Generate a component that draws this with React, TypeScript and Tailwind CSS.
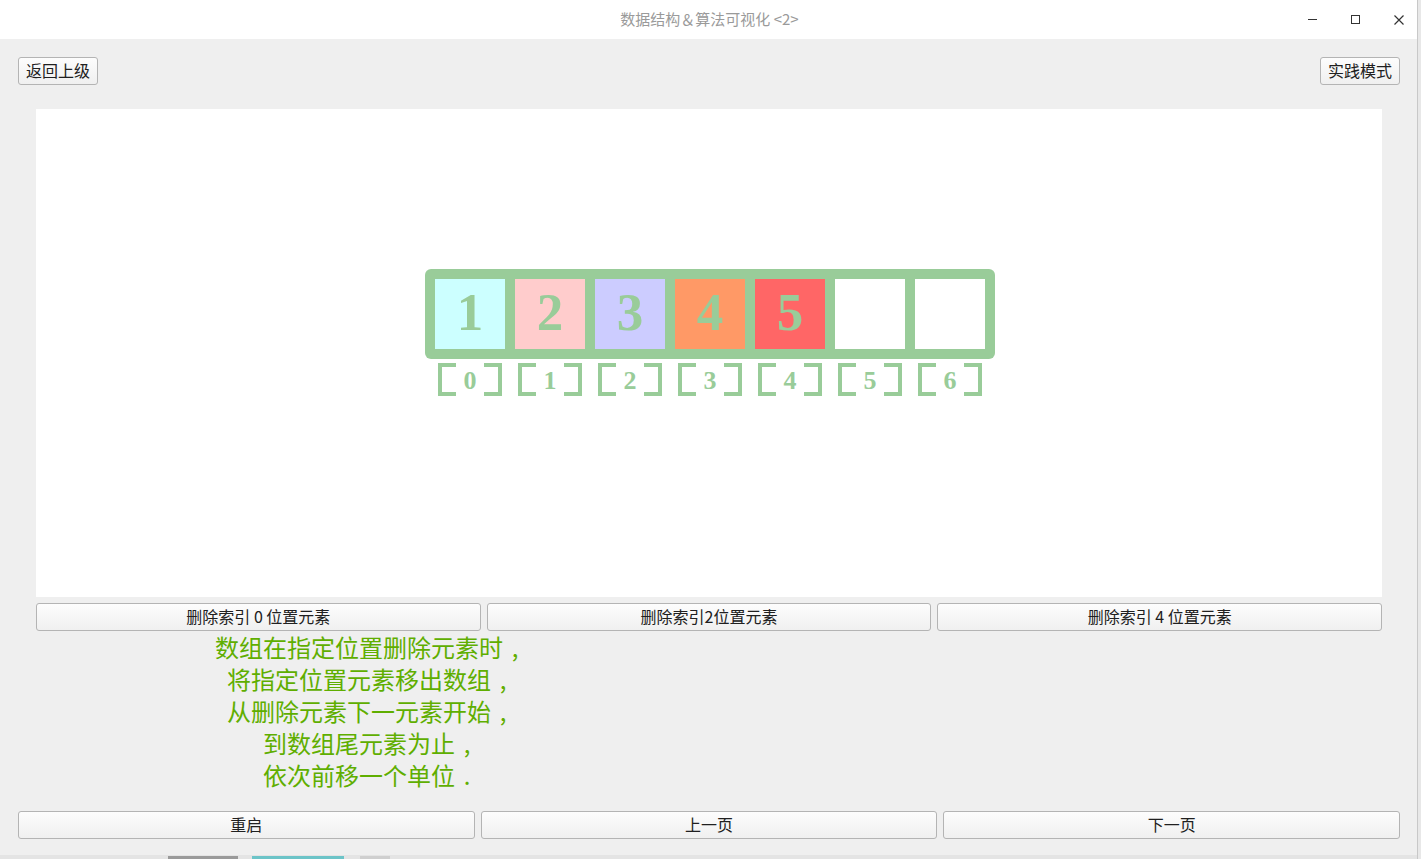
import React from "react";

const cells = [
  { v: "1", bg: "bg-[#ccffff]" },
  { v: "2", bg: "bg-[#ffcccc]" },
  { v: "3", bg: "bg-[#ccccff]" },
  { v: "4", bg: "bg-[#ff9966]" },
  { v: "5", bg: "bg-[#ff6666]" },
  { v: "", bg: "bg-white" },
  { v: "", bg: "bg-white" },
];

const lines: [string, string][] = [
  ["数组在指定位置删除元素时", ","],
  ["将指定位置元素移出数组", ","],
  ["从删除元素下一元素开始", ","],
  ["到数组尾元素为止", ","],
  ["依次前移一个单位", "."],
];

function Btn({ children, className = "" }: { children: React.ReactNode; className?: string }) {
  return (
    <button
      className={
        "h-[28px] flex items-center justify-center pb-[3px] rounded-[3px] border border-[#b4b4b4] bg-gradient-to-b from-[#fdfdfd] to-[#f0f0f0] text-[16px] leading-none text-[#202020] " +
        className
      }
    >
      {children}
    </button>
  );
}

export default function App() {
  const cjk = { fontFamily: '"Noto Sans CJK SC", "Noto Sans", sans-serif' };
  const serif = { fontFamily: '"Liberation Serif", "DejaVu Serif", serif' };
  return (
    <div className="w-[1421px] h-[859px] flex overflow-hidden bg-[#efefef]" style={cjk}>
      <div className="w-[1417px] flex flex-col">
        {/* title bar */}
        <div className="h-[39px] bg-white flex items-center relative shrink-0">
          <div className="flex-1 text-center text-[15px] text-[#9a9a9a] pl-[2px]">数据结构＆算法可视化 &lt;2&gt;</div>
          <div className="absolute right-[-3px] top-0 h-[39px] flex items-center">
            <div className="w-[43px] flex justify-center">
              <div className="w-[9px] h-[1px] bg-[#333]" />
            </div>
            <div className="w-[43px] flex justify-center">
              <div className="w-[9px] h-[9px] border border-[#333]" />
            </div>
            <div className="w-[43px] flex justify-center">
              <svg width="10" height="10" viewBox="0 0 10 10">
                <path d="M0.5 0.5 L9.5 9.5 M9.5 0.5 L0.5 9.5" stroke="#333" strokeWidth="1.2" />
              </svg>
            </div>
          </div>
        </div>

        {/* body */}
        <div className="flex-1 flex flex-col bg-[#efefef]">
          <div className="flex justify-between pl-[18px] pr-[17px] pt-[18px]">
            <Btn className="w-[80px]">返回上级</Btn>
            <Btn className="w-[80px]">实践模式</Btn>
          </div>

          <div className="ml-[36px] mr-[35px] mt-[24px] h-[488px] bg-white flex flex-col items-center pt-[160px] pl-[2px]">
            <div className="flex gap-[10px] p-[10px] bg-[#99cc99] rounded-[6px]">
              {cells.map((c, i) => (
                <div
                  key={i}
                  className={"w-[70px] h-[70px] flex items-center justify-center pb-[3px] font-bold text-[53px] leading-none text-[#99cc99] " + c.bg}
                  style={serif}
                >
                  {c.v}
                </div>
              ))}
            </div>
            <div className="flex gap-[10px] px-[10px] mt-[4px]">
              {cells.map((_, i) => (
                <div key={i} className="w-[70px] h-[33px] flex items-center justify-between px-[3px]">
                  <div className="w-[18px] h-[33px] border-[4px] border-r-0 border-[#99cc99]" />
                  <div className="font-bold text-[26px] leading-none text-[#99cc99] pt-[3px]" style={serif}>
                    {i}
                  </div>
                  <div className="w-[18px] h-[33px] border-[4px] border-l-0 border-[#99cc99]" />
                </div>
              ))}
            </div>
          </div>

          <div className="ml-[36px] mr-[35px] mt-[6px] grid grid-cols-3 gap-[6px]">
            <Btn>删除索引 0 位置元素</Btn>
            <Btn>删除索引2位置元素</Btn>
            <Btn>删除索引 4 位置元素</Btn>
          </div>

          <div className="ml-[36px] w-[670px] flex flex-col items-center text-[24px] leading-[32px] text-[#5fae00]">
            {lines.map(([t, p], i) => (
              <div key={i} className="flex">
                <span>{t}</span>
                <span className="inline-block w-[24px] text-center">{p}</span>
              </div>
            ))}
          </div>

          <div className="pl-[18px] pr-[17px] mt-[20px] grid grid-cols-3 gap-[6px]">
            <Btn>重启</Btn>
            <Btn>上一页</Btn>
            <Btn>下一页</Btn>
          </div>
          <div className="flex-1" />
          <div className="h-[4px] bg-[#e4e4e4] flex items-end">
            <div className="ml-[168px] w-[70px] h-[3px] bg-[#9a9a9a]" />
            <div className="ml-[14px] w-[92px] h-[3px] bg-[#6cc4c8]" />
            <div className="ml-[16px] w-[30px] h-[3px] bg-[#cfcfcf]" />
          </div>
        </div>
      </div>
      <div className="w-[4px] flex flex-col bg-[#e8e8e8] border-l border-[#c8c8c8]" />
    </div>
  );
}
